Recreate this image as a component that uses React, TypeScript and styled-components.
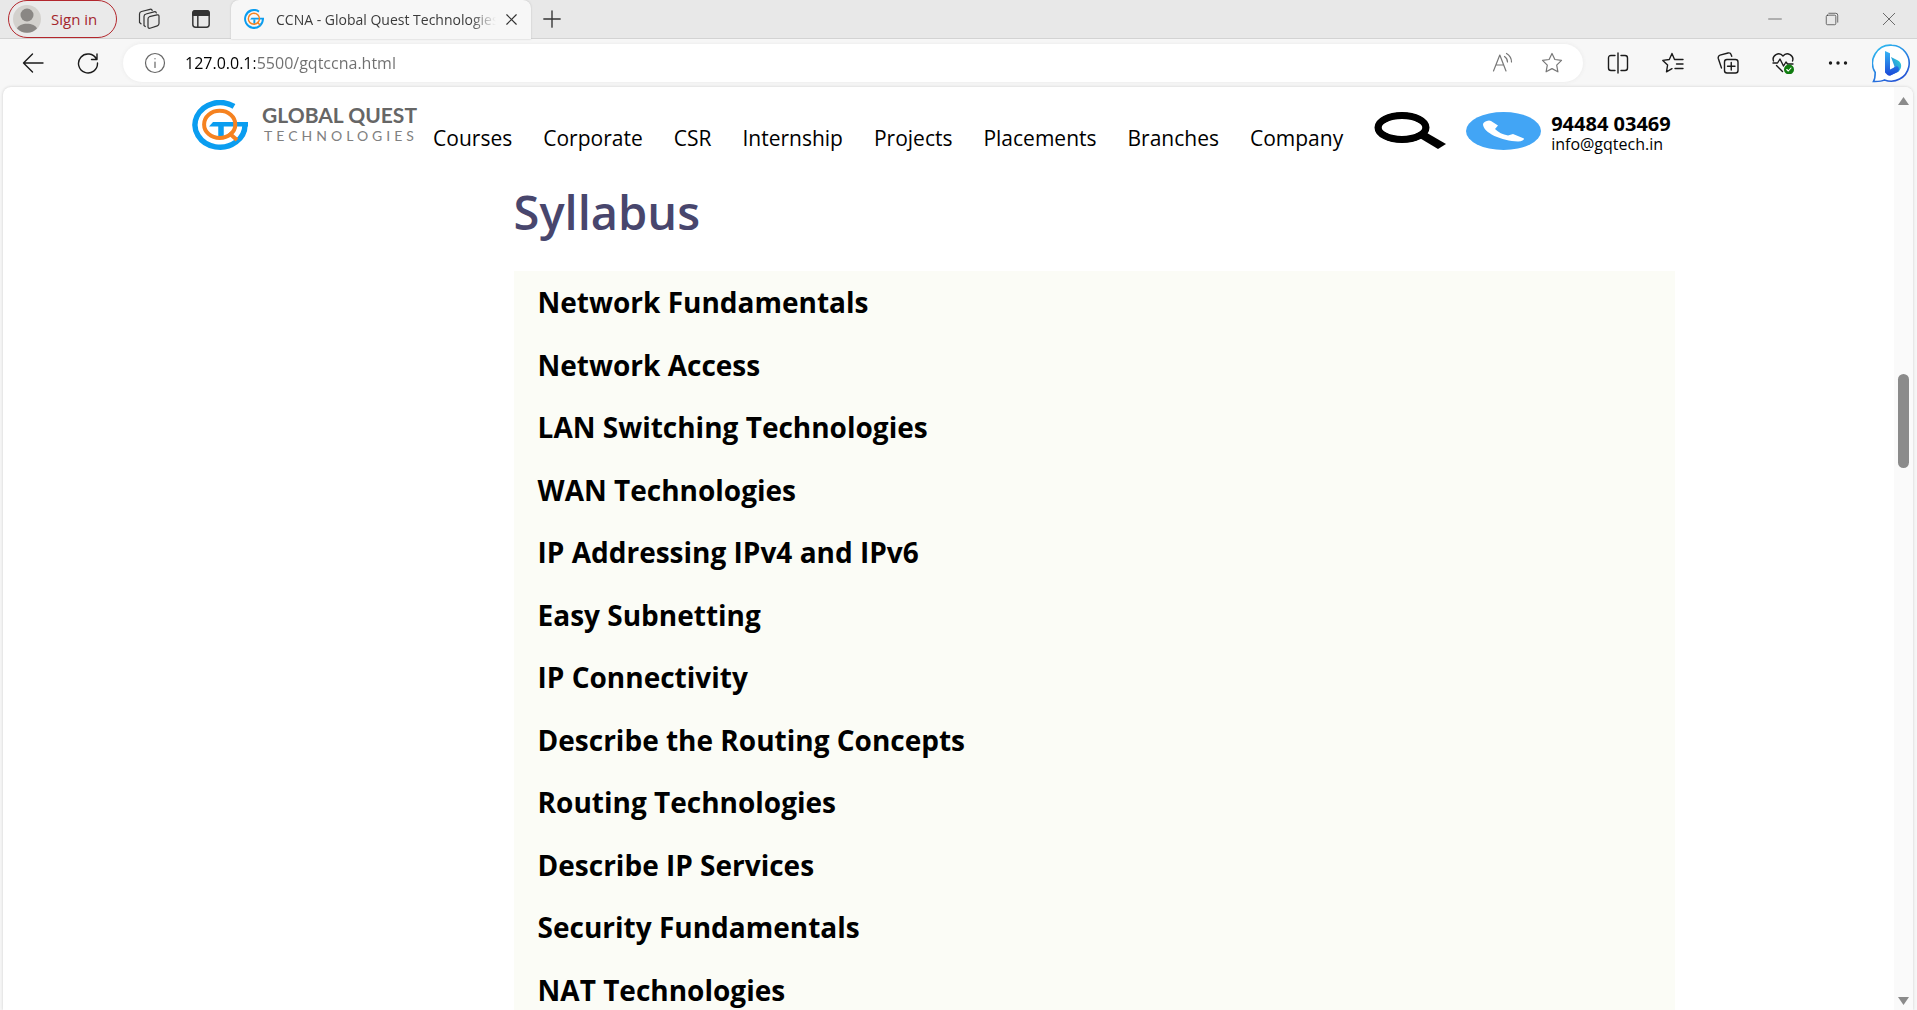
import React from "react";
import styled, { createGlobalStyle } from "styled-components";

const uiFont = `"Open Sans", "Noto Sans", "Liberation Sans", sans-serif`;

const GlobalStyle = createGlobalStyle`
  * { box-sizing: border-box; }
  html, body, #root { height: 100%; margin: 0; }
  body { font-family: ${uiFont}; background: #f7f7f7; color: #000; overflow: hidden; }
  button, input { font: inherit; color: inherit; border: 0; padding: 0; background: none; }
  a { color: inherit; text-decoration: none; }
  ul { list-style: none; margin: 0; padding: 0; }
  h1, h2, p { margin: 0; }
  svg { display: block; flex: none; }
`;

const Window = styled.div`
  display: flex;
  flex-direction: column;
  height: 100vh;
`;

/* ---------- tab strip ---------- */

const TabStrip = styled.div`
  display: flex;
  flex: none;
  height: 39px;
  padding-left: 8px;
  background: #e8e8e8;
  border-bottom: 1px solid #d3d3d3;
`;

const SignIn = styled.button`
  display: flex;
  align-items: center;
  gap: 10px;
  width: 109px;
  height: 38px;
  padding-left: 4px;
  border: 1px solid #b3272d;
  border-radius: 19px;
  background: #eaeaea;
  color: #a4262c;
  font-size: 15px;
`;

const StripButton = styled.button<{ $w: number }>`
  display: flex;
  align-items: center;
  justify-content: center;
  width: ${(p) => p.$w}px;
  height: 38px;
  color: #333;
`;

const StripTools = styled.div`
  display: flex;
  margin: 0 4px 0 6px;
`;

const Tab = styled.div`
  display: flex;
  align-items: center;
  width: 300px;
  height: 39px;
  padding: 0 5px 1px 13px;
  background: #f7f7f7;
  border-radius: 8px 8px 0 0;
  box-shadow: 0 0 2px #bbb;
`;

const TabTitle = styled.span`
  flex: 1;
  margin-left: 12px;
  overflow: hidden;
  white-space: nowrap;
  font-size: 14px;
  color: #3b3b3b;
  mask-image: linear-gradient(to right, #000 88%, transparent);
`;

const WindowControls = styled.div`
  display: flex;
  margin-left: auto;
`;

/* ---------- toolbar ---------- */

const Toolbar = styled.div`
  display: flex;
  align-items: center;
  flex: none;
  height: 48px;
  padding: 0 6px 0 5px;
`;

const ToolButton = styled.button`
  display: flex;
  align-items: center;
  justify-content: center;
  width: 55px;
  height: 40px;
  color: #1b1b1b;
`;

const AddressBar = styled.div`
  display: flex;
  align-items: center;
  flex: 1;
  height: 38px;
  margin: 0 7px 0 8px;
  padding: 0 7px 0 21px;
  border-radius: 19px;
  background: #fff;
  box-shadow: 0 0 4px #e9e9e9;
`;

const AddressInput = styled.input`
  flex: 1;
  min-width: 0;
  height: 30px;
  margin-left: 19px;
  outline: 0;
  font-size: 16px;
  color: transparent;
  background: linear-gradient(to right, #000 70px, #6f6f6f 70px);
  background-clip: text;
`;

const AddressButton = styled.button`
  display: flex;
  align-items: center;
  justify-content: center;
  width: 49px;
  height: 32px;
  color: #777;
`;

const ChatButton = styled.button`
  margin-left: 7px;
`;

/* ---------- page ---------- */

const Viewport = styled.div`
  display: flex;
  flex: 1;
  min-height: 0;
  margin: 0 4px 0 3px;
  overflow: hidden;
  border-radius: 8px 8px 0 0;
  background: #fff;
  box-shadow: 0 0 3px #ccc;
`;

const Page = styled.div`
  flex: 1;
  min-width: 0;
  overflow: hidden;
`;

const Header = styled.header`
  display: flex;
  align-items: flex-start;
  height: 84px;
  padding: 13px 0 0 10%;
  white-space: nowrap;
`;

const Brand = styled.a`
  display: flex;
  align-items: flex-start;
  width: 241px;
`;

const BrandText = styled.span`
  display: flex;
  flex-direction: column;
  margin-left: 14px;
  padding-top: 3px;
  font-family: Lato, sans-serif;
`;

const BrandName = styled.span`
  font-size: 21px;
  line-height: 24px;
  font-weight: 700;
  color: #666;
`;

const BrandSub = styled.span`
  padding-left: 2px;
  font-size: 14px;
  line-height: 18px;
  letter-spacing: 4px;
  color: #808080;
`;

const NavList = styled.ul`
  display: flex;
  gap: 31px;
  padding-top: 23px;
  font-size: 21px;
  line-height: 30px;
`;

const SearchButton = styled.button`
  margin: 12px 0 0 30px;
`;

const Contact = styled.div`
  display: flex;
  gap: 10px;
  margin: 12px 0 0 20px;
`;

const ContactText = styled.address`
  display: flex;
  flex-direction: column;
  padding-top: 2px;
  font-style: normal;
  font-size: 16px;
  line-height: 20px;
`;

const Phone = styled.a`
  font-size: 20px;
  font-weight: 700;
`;

const Main = styled.main`
  padding: 0 11.6% 0 27%;
`;

const Title = styled.h1`
  height: 100px;
  font-size: 47px;
  line-height: 82px;
  font-weight: 600;
  color: #48466d;
`;

const Topics = styled.ul`
  display: grid;
  grid-auto-rows: 1fr;
  min-height: 750px;
  padding-left: 24px;
  background: #fbfcf6;
`;

const Topic = styled.li`
  display: flex;
  align-items: center;
  font-size: 28px;
  line-height: 40px;
  font-weight: 700;
`;

const Scrollbar = styled.div`
  display: flex;
  flex-direction: column;
  align-items: center;
  justify-content: space-between;
  width: 19px;
  padding: 10px 0 5px;
  background: #fafafa;
`;

const Track = styled.div`
  display: flex;
  flex-direction: column;
  flex: 1;
`;

const TrackSpace = styled.div<{ $grow: number }>`
  flex: ${(p) => p.$grow};
`;

const Thumb = styled.div`
  flex: 94;
  width: 11px;
  border-radius: 6px;
  background: #8b8b8b;
`;

/* ---------- drawings ---------- */

const Logo = ({ w, h }: { w: number; h: number }) => (
  <svg width={w} height={h} viewBox="0 0 56 50" preserveAspectRatio="none" fill="none">
    <path d="M42 6.400A25 22.300 0 1 0 53 24.500" stroke="#0a9df0" strokeWidth="5.400" />
    <path d="M21 22h35v4.500H17Z" fill="#0a9df0" />
    <path d="M29 26v11" stroke="#0a9df0" strokeWidth="5.500" />
    <ellipse cx="27.700" cy="24.400" rx="15.600" ry="13.600" stroke="#f58220" strokeWidth="4" />
    <path d="m37 33 8 7" stroke="#f58220" strokeWidth="4" />
  </svg>
);

const Line = ({ size = 22, children, sw = 1.4 }: { size?: number; sw?: number; children: React.ReactNode }) => (
  <svg width={size} height={size} viewBox="0 0 22 22" fill="none" stroke="currentColor" strokeWidth={sw} strokeLinecap="round" strokeLinejoin="round">
    {children}
  </svg>
);

const Avatar = () => (
  <svg width="28" height="28" viewBox="0 0 28 28">
    <circle cx="14" cy="14" r="14" fill="#d3d1cd" />
    <circle cx="14" cy="10" r="6.500" fill="#8a8784" />
    <path d="M4 23.500C6 17 22 17 24 23.500a14 14 0 0 1-20 0Z" fill="#8a8784" />
  </svg>
);

const Bing = () => (
  <svg width="39" height="39" viewBox="0 0 39 39">
    <defs>
      <linearGradient id="ring" x1="0" y1="0" x2="0.600" y2="1">
        <stop offset="0" stopColor="#2fc3f2" />
        <stop offset="1" stopColor="#2456d6" />
      </linearGradient>
      <linearGradient id="stem" x1="0" y1="0" x2="0" y2="1">
        <stop offset="0" stopColor="#35b4f5" />
        <stop offset="1" stopColor="#1b48d8" />
      </linearGradient>
      <linearGradient id="bowl" x1="1" y1="0" x2="0" y2="1">
        <stop offset="0" stopColor="#35dbd2" />
        <stop offset="1" stopColor="#2067e8" />
      </linearGradient>
    </defs>
    <path d="M20 1.200a18 18 0 1 1-7.500 34.700c-3 1.600-7 1.700-11 1.600 1.400-2.500 1.700-5 1.700-9A18 18 0 0 1 20 1.200Z" fill="#fff" stroke="url(#ring)" strokeWidth="1.600" />
    <path d="m19 13 6.500 3.200c5 2.600 4.500 8 1 11.500L18 31.500l4.500-9Z" fill="url(#bowl)" />
    <path d="m13 7 5 2.300v16.200l7-3.500c2.500 1.500 2.500 4.500.5 6l-7 3.500c-1 .5-2 .3-3-.4L13 28.600Z" fill="url(#stem)" />
  </svg>
);

const navItems = ["Courses", "Corporate", "CSR", "Internship", "Projects", "Placements", "Branches", "Company"];

const topics = [
  "Network Fundamentals",
  "Network Access",
  "LAN Switching Technologies",
  "WAN Technologies",
  "IP Addressing IPv4 and IPv6",
  "Easy Subnetting",
  "IP Connectivity",
  "Describe the Routing Concepts",
  "Routing Technologies",
  "Describe IP Services",
  "Security Fundamentals",
  "NAT Technologies",
];

const star = "M11 1.500l2.900 6 6.600.9-4.800 4.700 1.200 6.700L11 16.600l-5.900 3.200 1.200-6.700L1.500 8.400l6.600-.9Z";

const Tabs = () => (
  <TabStrip>
    <SignIn><Avatar />Sign in</SignIn>
    <StripTools>
      <StripButton $w={52} aria-label="Workspaces">
        <Line sw={1.2}>
          <path d="M11.500 8.700l7.500-1.800q2-.4 2 1.500v7.200q0 1.800-1.700 2.300l-7.300 2.300q-2 .5-2-1.500V11q0-1.800 1.500-2.300Z" />
          <path d="M6 17.500V8.500q0-2 2-2.500l8-2.200q2-.4 2.300 1.200M1.500 14.500V6q0-2 2-2.500l8.500-2.200q1.800-.4 2.200 1.200M6 17.500l1.300 1M1.500 14.500l1.500 1.300" />
        </Line>
      </StripButton>
      <StripButton $w={52} aria-label="Tab actions">
        <Line size={20} sw={1.6}>
          <rect x="2" y="2" width="18" height="18" rx="3" />
          <path d="M2 7V5q0-3 3-3h12q3 0 3 3v2Z" fill="currentColor" />
          <path d="M7.500 7v13" />
        </Line>
      </StripButton>
    </StripTools>
    <Tab>
      <Logo w={20} h={20} />
      <TabTitle>CCNA - Global Quest Technologies</TabTitle>
      <StripButton $w={30} aria-label="Close tab"><Line size={13} sw={2}><path d="M3 3l16 16M19 3 3 19" /></Line></StripButton>
    </Tab>
    <StripButton $w={42} aria-label="New tab"><Line size={20} sw={1.500}><path d="M11 2v18M2 11h18" /></Line></StripButton>
    <WindowControls>
      <StripButton $w={57} aria-label="Minimize"><Line size={14} sw={1}><path d="M1 11h20" /></Line></StripButton>
      <StripButton $w={57} aria-label="Restore"><Line size={14} sw={1.1}><rect x="2" y="5" width="15" height="15" rx="2" /><path d="M6 2h11q3 0 3 3v11" /></Line></StripButton>
      <StripButton $w={57} aria-label="Close"><Line size={14} sw={1.1}><path d="M2 2l18 18M20 2 2 20" /></Line></StripButton>
    </WindowControls>
  </TabStrip>
);

const Tools = () => (
  <Toolbar>
    <ToolButton aria-label="Back"><Line><path d="M21 11H1.500M10.500 2 1.500 11l9 9" /></Line></ToolButton>
    <ToolButton aria-label="Refresh"><Line><path d="M19.500 7.200A9.500 9.500 0 1 0 20.500 11M20 2v5.500h-5.500" /></Line></ToolButton>
    <AddressBar>
      <Line sw={1.2}><g color="#666" stroke="#666"><circle cx="11" cy="11" r="9.500" /><path d="M11 10v5.500M11 6.500v.3" /></g></Line>
      <AddressInput aria-label="Address" defaultValue="127.0.0.1:5500/gqtccna.html" />
      <AddressButton aria-label="Read aloud">
        <Line sw={1.2}><path d="M1.500 19 7.800 3l6.200 16M4 13h7.500M12.500 4.500q3 2 3 5.500M14.500 1.500q5 3 5 8.500" /></Line>
      </AddressButton>
      <AddressButton aria-label="Add to favorites"><Line sw={1.2}><path d={star} /></Line></AddressButton>
    </AddressBar>
    <ToolButton aria-label="Split screen">
      <Line><path d="M8 3.500H4q-2.500 0-2.500 2.500v10q0 2.500 2.500 2.500h4M14 3.500h4q2.500 0 2.500 2.500v10q0 2.500-2.500 2.500h-4M11 1v20" /></Line>
    </ToolButton>
    <ToolButton aria-label="Favorites">
      <Line><path d="M14 7.500h-1.500L10 1.500 7.300 7.500.800 8.400l4.800 4.600-1.100 6.800 5.500-3.100M14 7.500h7M14.500 12H21M13 16.500h8" /></Line>
    </ToolButton>
    <ToolButton aria-label="Collections">
      <Line><rect x="7.500" y="7.500" width="13.500" height="13.500" rx="2.500" /><path d="M14.250 10.500v7.500M10.500 14.250h7.500M4.500 16 1.300 6.500Q.7 4 3 3.200L11 1q2.500-.5 3.200 1.800l.5 1.500" /></Line>
    </ToolButton>
    <ToolButton aria-label="Browser essentials">
      <Line>
        <path d="M1.500 9C-.5 3.500 7-1 11 4c4-5 11.500-.5 9.500 5M1 11h4.500l2.500-4 3.500 7 2.500-4 1.500 2H21M4.500 13.500l6 6" />
        <circle cx="17" cy="17.500" r="5" fill="#107c10" stroke="none" />
        <path d="m14.800 17.500 1.500 1.500 2.700-3" stroke="#fff" strokeWidth="1.100" />
      </Line>
    </ToolButton>
    <ToolButton aria-label="Settings and more">
      <Line><g fill="currentColor" stroke="none"><circle cx="3.500" cy="11" r="1.700" /><circle cx="11" cy="11" r="1.700" /><circle cx="18.500" cy="11" r="1.700" /></g></Line>
    </ToolButton>
    <ChatButton aria-label="Bing chat"><Bing /></ChatButton>
  </Toolbar>
);

const SiteHeader = () => (
  <Header>
    <Brand href="#">
      <Logo w={56} h={50} />
      <BrandText>
        <BrandName>GLOBAL QUEST</BrandName>
        <BrandSub>TECHNOLOGIES</BrandSub>
      </BrandText>
    </Brand>
    <nav>
      <NavList>
        {navItems.map((item) => <li key={item}><a href="#">{item}</a></li>)}
      </NavList>
    </nav>
    <SearchButton aria-label="Search">
      <svg width="73" height="38" viewBox="0 0 73 38">
        <ellipse cx="29" cy="15.500" rx="24" ry="12" fill="none" stroke="#000" strokeWidth="7" />
        <ellipse cx="29" cy="15.500" rx="23.500" ry="12" fill="none" stroke="#000" strokeWidth="6" />
        <path d="m54 21 19 11-8 5-20-12Z" />
      </svg>
    </SearchButton>
    <Contact>
      <svg width="75" height="38" viewBox="0 0 75 38">
        <ellipse cx="37.500" cy="19" rx="37.500" ry="19" fill="#42a5f5" />
        <path d="M17 12q1-3 6-3.500l2 .500 7 4.500-3 3.500q5 5 13 6.500l5-1.500 11 4.500q0 2.500-6 3C36 29 17 21 17 12Z" fill="#fff" />
      </svg>
      <ContactText>
        <Phone href="#">94484 03469</Phone>
        <a href="#">info@gqtech.in</a>
      </ContactText>
    </Contact>
  </Header>
);

export default function App() {
  return (
    <Window>
      <GlobalStyle />
      <Tabs />
      <Tools />
      <Viewport>
        <Page>
          <SiteHeader />
          <Main>
            <Title>Syllabus</Title>
            <Topics>
              {topics.map((topic) => <Topic key={topic}>{topic}</Topic>)}
            </Topics>
          </Main>
        </Page>
        <Scrollbar aria-hidden="true">
          <svg width="11" height="9" viewBox="0 0 11 9"><path d="M5.500 0 11 8H0Z" fill="#8b8b8b" /></svg>
          <Track>
            <TrackSpace $grow={268} />
            <Thumb />
            <TrackSpace $grow={528} />
          </Track>
          <svg width="11" height="9" viewBox="0 0 11 9"><path d="M0 1h11L5.500 9Z" fill="#8b8b8b" /></svg>
        </Scrollbar>
      </Viewport>
    </Window>
  );
}
